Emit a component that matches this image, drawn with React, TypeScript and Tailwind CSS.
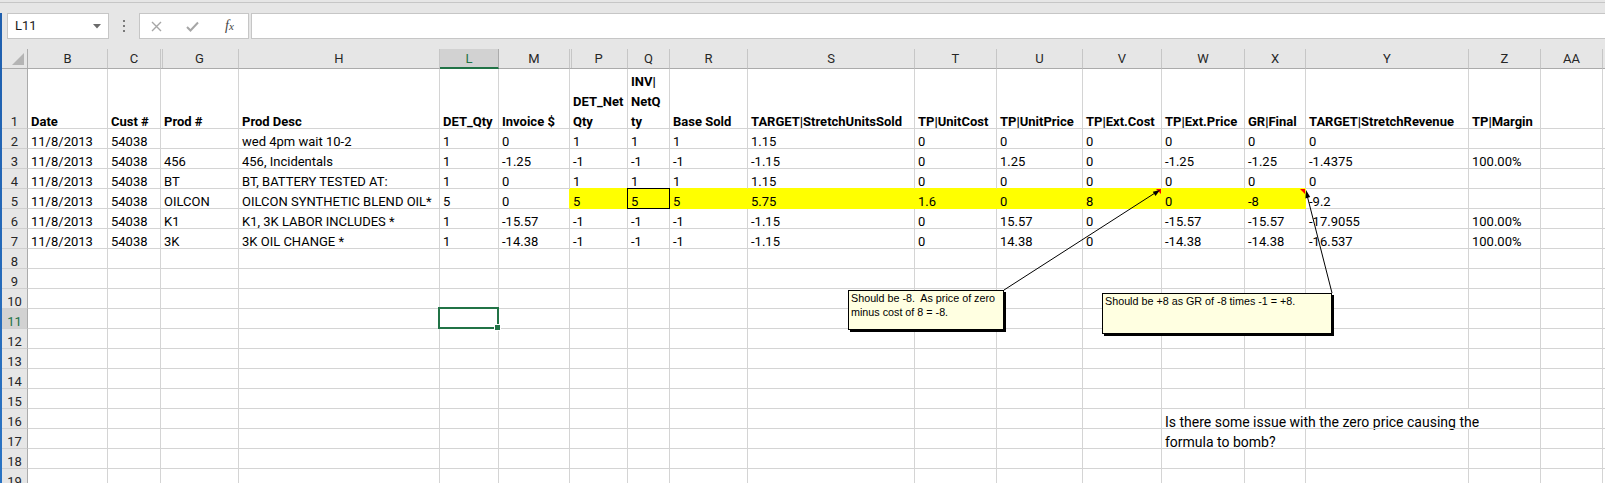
import React from "react";

type Col = { k: string; w: string; dbl?: boolean; sel?: boolean };

const COLS: Col[] = [
  { k: "B", w: "w-[80px]" },
  { k: "C", w: "w-[53px]", dbl: true },
  { k: "G", w: "w-[78px]" },
  { k: "H", w: "w-[201px]" },
  { k: "L", w: "w-[59px]", sel: true },
  { k: "M", w: "w-[71px]", dbl: true },
  { k: "P", w: "w-[58px]" },
  { k: "Q", w: "w-[42px]" },
  { k: "R", w: "w-[78px]" },
  { k: "S", w: "w-[167px]" },
  { k: "T", w: "w-[82px]" },
  { k: "U", w: "w-[86px]" },
  { k: "V", w: "w-[79px]" },
  { k: "W", w: "w-[83px]" },
  { k: "X", w: "w-[61px]" },
  { k: "Y", w: "w-[163px]" },
  { k: "Z", w: "w-[72px]" },
  { k: "AA", w: "w-[62px]" },
  { k: "", w: "w-[60px]" },
];

const HEAD = [
  "Date",
  "Cust #",
  "Prod #",
  "Prod Desc",
  "DET_Qty",
  "Invoice $",
  "DET_Net\nQty",
  "INV|\nNetQ\nty",
  "Base Sold",
  "TARGET|StretchUnitsSold",
  "TP|UnitCost",
  "TP|UnitPrice",
  "TP|Ext.Cost",
  "TP|Ext.Price",
  "GR|Final",
  "TARGET|StretchRevenue",
  "TP|Margin",
  "",
  "",
];

const DATA: string[][] = [
  ["11/8/2013", "54038", "", "wed 4pm wait 10-2", "1", "0", "1", "1", "1", "1.15", "0", "0", "0", "0", "0", "0", "", "", ""],
  ["11/8/2013", "54038", "456", "456, Incidentals", "1", "-1.25", "-1", "-1", "-1", "-1.15", "0", "1.25", "0", "-1.25", "-1.25", "-1.4375", "100.00%", "", ""],
  ["11/8/2013", "54038", "BT", "BT, BATTERY TESTED AT:", "1", "0", "1", "1", "1", "1.15", "0", "0", "0", "0", "0", "0", "", "", ""],
  ["11/8/2013", "54038", "OILCON", "OILCON SYNTHETIC BLEND OIL*", "5", "0", "5", "5", "5", "5.75", "1.6", "0", "8", "0", "-8", "-9.2", "", "", ""],
  ["11/8/2013", "54038", "K1", "K1, 3K LABOR INCLUDES *", "1", "-15.57", "-1", "-1", "-1", "-1.15", "0", "15.57", "0", "-15.57", "-15.57", "-17.9055", "100.00%", "", ""],
  ["11/8/2013", "54038", "3K", "3K OIL CHANGE *", "1", "-14.38", "-1", "-1", "-1", "-1.15", "0", "14.38", "0", "-14.38", "-14.38", "-16.537", "100.00%", "", ""],
];

function rowValues(r: number): string[] {
  if (r >= 2 && r <= 7) return DATA[r - 2];
  const empty = COLS.map(() => "");
  if (r === 16) empty[13] = "Is there some issue with the zero price causing the";
  if (r === 17) empty[13] = "formula to bomb?";
  return empty;
}

function isYellow(r: number, c: number) {
  return r === 5 && c >= 6 && c <= 14;
}

function RowHeader({ n, tall }: { n: number; tall?: boolean }) {
  const sel = n === 11;
  return (
    <div
      className={`w-[26px] shrink-0 flex items-end justify-center border-r border-b border-r-[#ababab] border-b-[#cfcfcf] ${
        tall ? "h-[60px]" : "h-[20px]"
      } ${sel ? "bg-[#d2d2d2] text-[#217346]" : "bg-[#e6e6e6] text-[#262626]"}`}
    >
      <span className="leading-[20px] -mb-[4px]">{n}</span>
    </div>
  );
}

function Row({ r }: { r: number }) {
  const vals = r === 1 ? HEAD : rowValues(r);
  return (
    <div className="flex">
      <RowHeader n={r} tall={r === 1} />
      {COLS.map((col, c) => {
        const yellow = isYellow(r, c);
        const yellowRight = yellow || (r === 5 && c === 5);
        const yellowBottom = yellow || (r === 4 && c >= 6 && c <= 14);
        const hideRight =
          (r === 16 && c >= 13 && c <= 15) || (r === 17 && c === 13);
        const big = r === 16 || r === 17;
        const rightCls = yellowRight
          ? "border-r-[#ffff00]"
          : hideRight
          ? "border-r-transparent"
          : "border-r-[#d4d4d4]";
        const bottomCls = yellowBottom ? "border-b-[#ffff00]" : "border-b-[#d4d4d4]";
        return (
          <div
            key={c}
            className={`${col.w} shrink-0 relative flex items-end border-r border-b pl-[3px] ${rightCls} ${bottomCls} ${
              r === 1 ? "h-[60px] font-bold" : "h-[20px]"
            } ${yellow ? "bg-[#ffff00]" : ""}`}
          >
            <span
              className={`shrink-0 leading-[20px] -mb-[4px] whitespace-pre ${big ? "text-[14px]" : ""}`}
            >
              {vals[c]}
            </span>
            {r === 5 && c === 7 && <div className="absolute -inset-px border border-black" />}
            {r === 11 && c === 4 && (
              <div className="absolute -left-[2px] -top-[2px] -right-[1px] -bottom-[1px] border-2 border-[#217346] z-10">
                <div className="absolute -right-[4px] -bottom-[4px] w-[7px] h-[7px] bg-[#217346] border border-white" />
              </div>
            )}
          </div>
        );
      })}
    </div>
  );
}

function HeaderRow() {
  return (
    <div className="flex h-[20px]">
      <div className="w-[26px] shrink-0 relative bg-[#e6e6e6] border-r border-b border-r-[#ababab] border-b-[#ababab]">
        <svg className="absolute inset-0" width="26" height="20">
          <polygon points="10,16 22,16 22,4" fill="#b4b4b4" />
        </svg>
      </div>
      {COLS.map((col, c) => (
        <div
          key={c}
          className={`${col.w} shrink-0 relative flex items-center justify-center border-r ${
            col.sel
              ? "bg-[#d2d2d2] text-[#217346] border-b-2 border-b-[#217346] border-r-[#ababab] pt-[2px]"
              : "bg-[#e6e6e6] text-[#262626] border-b border-b-[#ababab] border-r-[#c6c6c6]"
          }`}
        >
          <span className="leading-[18px]">{col.k}</span>
          {col.dbl && (
            <div className="absolute -right-[3px] top-0 bottom-0 w-px bg-[#c6c6c6] z-10" />
          )}
        </div>
      ))}
    </div>
  );
}

function FormulaBar() {
  return (
    <div className="flex h-[26px]">
      <div className="ml-[5px] w-[102px] shrink-0 border border-[#c6c6c6] bg-white flex items-center justify-between pl-[7px] pr-[7px]">
        <span className="leading-[20px] text-[#1a1a1a]">L11</span>
        <svg width="8" height="5" viewBox="0 0 8 5">
          <path d="M0 0H8L4 4.5Z" fill="#6b6b6b" />
        </svg>
      </div>
      <div className="w-[30px] shrink-0 flex flex-col items-center justify-center gap-[3px]">
        <div className="w-[2px] h-[2px] bg-[#7a7a7a]" />
        <div className="w-[2px] h-[2px] bg-[#7a7a7a]" />
        <div className="w-[2px] h-[2px] bg-[#7a7a7a]" />
      </div>
      <div className="w-[110px] shrink-0 border border-[#c6c6c6] bg-white flex items-center">
        <div className="w-[33px] flex justify-center">
          <svg width="11" height="11" viewBox="0 0 11 11">
            <path d="M1 1L10 10M10 1L1 10" stroke="#a6a6a6" strokeWidth="1.4" />
          </svg>
        </div>
        <div className="w-[38px] flex justify-center">
          <svg width="13" height="11" viewBox="0 0 13 11">
            <path d="M1 6L4.5 9.5L12 1.5" stroke="#a6a6a6" strokeWidth="2" fill="none" />
          </svg>
        </div>
        <div className="w-[37px] flex justify-center">
          <span className="font-['Liberation_Serif',serif] italic text-[14px] text-[#444] leading-[16px]">
            f<span className="text-[11px]">x</span>
          </span>
        </div>
      </div>
      <div className="ml-[2px] flex-1 -mr-[4px] border border-[#c6c6c6] bg-white" />
    </div>
  );
}

function Overlays() {
  return (
    <>
      <svg className="absolute left-0 top-0 pointer-events-none z-20" width="1605" height="483">
        <polygon points="1156,189 1161,189 1161,194" fill="#ff0000" />
        <polygon points="1300,189 1305,189 1305,194" fill="#ff0000" />
        <line x1="1004" y1="290" x2="1155" y2="193" stroke="#000" strokeWidth="1" />
        <polygon points="1160,190 1155.5,195.9 1152.8,191.7" fill="#000" />
        <line x1="1332" y1="293" x2="1307.5" y2="197" stroke="#000" strokeWidth="1" />
        <polygon points="1306,190 1310.2,197.1 1305.4,198.4" fill="#000" />
      </svg>
      <div className="absolute left-[848px] top-[290px] w-[156px] h-[40px] bg-[#ffffe1] border border-black shadow-[2px_2px_0_#000] pl-[2px] font-['Liberation_Sans',Arial,sans-serif] text-[10.75px] leading-[14px] text-black whitespace-pre z-20">
        {"Should be -8.  As price of zero\nminus cost of 8 = -8."}
      </div>
      <div className="absolute left-[1102px] top-[293px] w-[230px] h-[41px] bg-[#ffffe1] border border-black shadow-[2px_2px_0_#000] pl-[2px] font-['Liberation_Sans',Arial,sans-serif] text-[10.75px] leading-[14px] text-black whitespace-pre z-20">
        {"Should be +8 as GR of -8 times -1 = +8."}
      </div>
    </>
  );
}

export default function App() {
  const rows: number[] = [];
  for (let i = 1; i <= 19; i++) rows.push(i);
  return (
    <div className="relative w-[1605px] h-[483px] overflow-hidden bg-[#e6e6e6] font-['Roboto',Arial,sans-serif] text-[13px] text-black">
      <div className="h-[2px]" />
      <div className="h-[11px] border-t border-[#c6c6c6]" />
      <div className="flex">
        <div className="w-[2px] shrink-0 bg-gradient-to-b from-[#1f5fae] to-[#2a74c4]" />
        <div className="flex-1 min-w-0">
          <FormulaBar />
          <div className="h-[10px]" />
          <div className="bg-white">
            <HeaderRow />
            {rows.map((r) => (
              <Row key={r} r={r} />
            ))}
          </div>
        </div>
      </div>
      <Overlays />
    </div>
  );
}
